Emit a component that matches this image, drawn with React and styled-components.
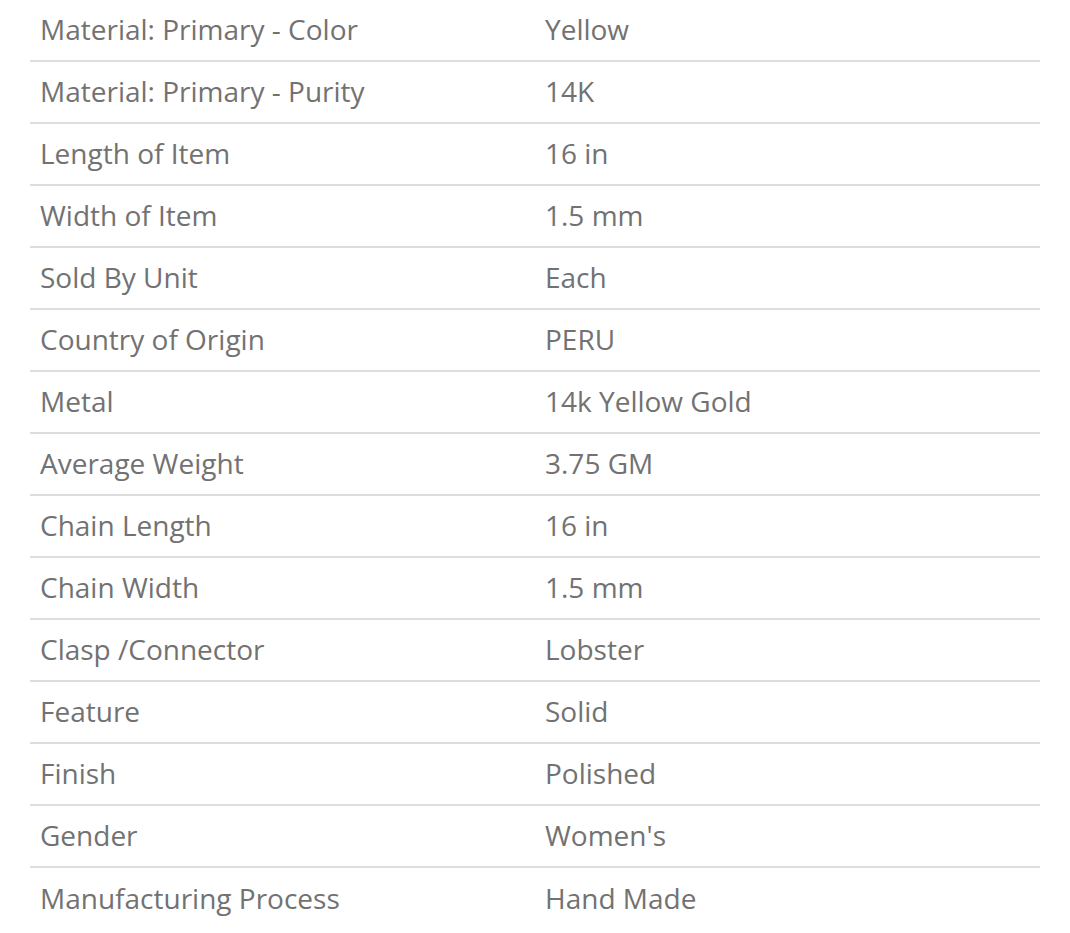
import React from "react";
import styled, { createGlobalStyle } from "styled-components";

const GlobalStyle = createGlobalStyle`
  body {
    margin: 0;
    background: #ffffff;
    font-family: "Open Sans", "Liberation Sans", sans-serif;
  }
`;

const specs = [
  ["Material: Primary - Color", "Yellow"],
  ["Material: Primary - Purity", "14K"],
  ["Length of Item", "16 in"],
  ["Width of Item", "1.5 mm"],
  ["Sold By Unit", "Each"],
  ["Country of Origin", "PERU"],
  ["Metal", "14k Yellow Gold"],
  ["Average Weight", "3.75 GM"],
  ["Chain Length", "16 in"],
  ["Chain Width", "1.5 mm"],
  ["Clasp /Connector", "Lobster"],
  ["Feature", "Solid"],
  ["Finish", "Polished"],
  ["Gender", "Women's"],
  ["Manufacturing Process", "Hand Made"],
];

class App extends React.Component {
  render() {
    return (
      <>
        <GlobalStyle />
        <SpecTable>
          {specs.map(([label, value], i) => (
            <SpecRow key={label} $last={i === specs.length - 1}>
              <Cell>{label}</Cell>
              <Cell>{value}</Cell>
            </SpecRow>
          ))}
        </SpecTable>
      </>
    );
  }
}

const SpecTable = styled.div`
  width: 1010px;
  margin-left: 30px;
  display: flex;
  flex-direction: column;
`;

const SpecRow = styled.div`
  display: grid;
  grid-template-columns: 505px 505px;
  align-items: center;
  height: 62px;
  padding-bottom: 2px;
  box-sizing: border-box;
  border-bottom: ${(p) => (p.$last ? "none" : "2px solid #dddddd")};
`;

const Cell = styled.div`
  padding-left: 10px;
  font-size: 28px;
  font-weight: 400;
  color: #727272;
  line-height: 38px;
  white-space: nowrap;
`;

export default App;
